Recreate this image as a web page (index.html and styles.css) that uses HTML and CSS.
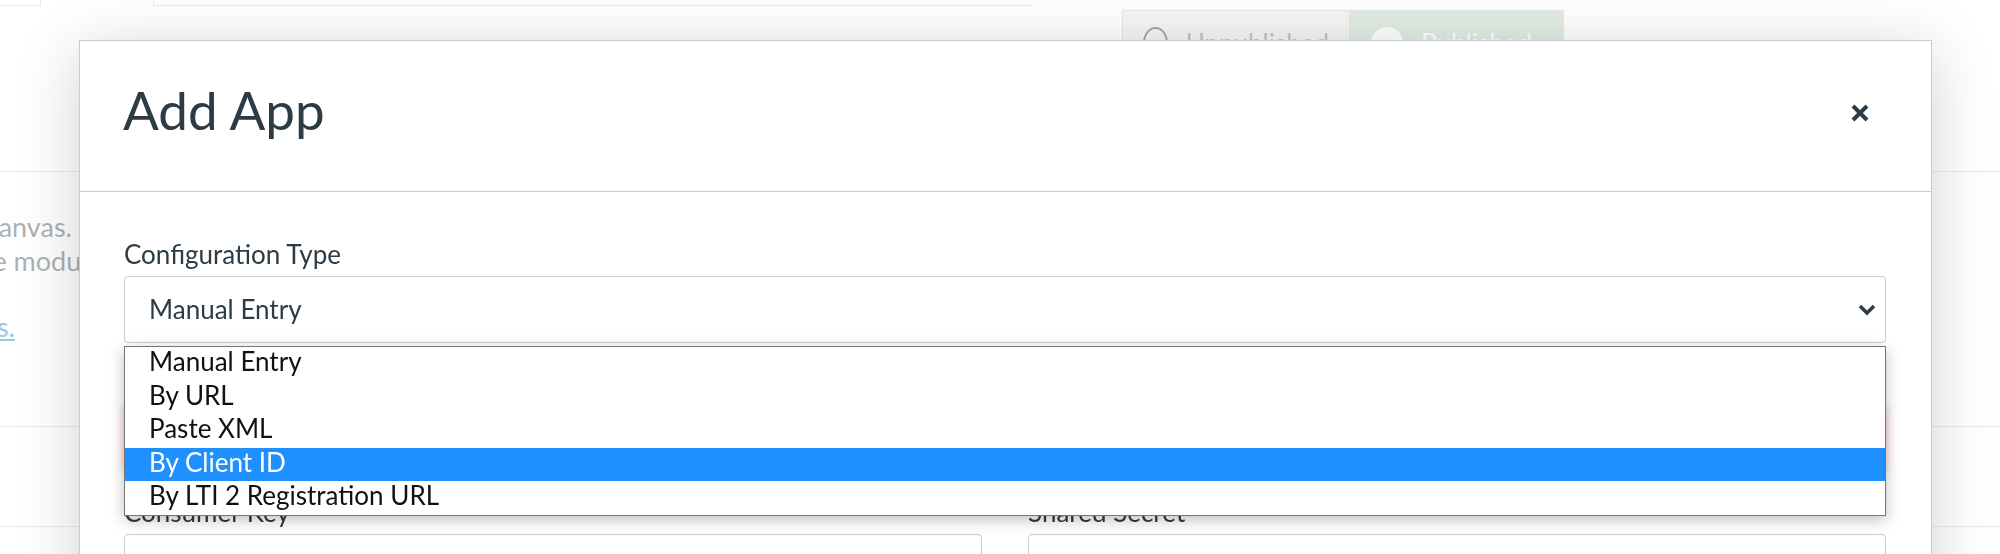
FILE: index.html
```html
<!DOCTYPE html>
<html lang="en">
<head>
    <meta charset="UTF-8">
    <meta name="viewport" content="width=device-width, initial-scale=1.0">
    <title>Add App</title>
    <link rel="stylesheet" href="styles.css">
</head>
<body>
    <!-- Page behind the modal -->
    <div class="page">
        <div class="page-top">
            <div class="top-box first"></div>
            <div class="top-box search"></div>
            <div class="publish-group">
                <button class="pub-btn unpublished"><span class="pub-dot"></span>Unpublished</button>
                <button class="pub-btn published"><span class="pub-dot"></span>Published</button>
            </div>
        </div>
        <div class="intro">
            <div class="intro-text">
                <p class="line">Apps are an easy way to add new features to Canvas.</p>
                <p class="line long">They can be added to individual courses, or to all courses through the modules.</p>
                <p class="line link-line"><a href="#">See some LTI tools that work great with Canvas.</a></p>
            </div>
        </div>
        <div class="section"></div>
        <div class="section"></div>
    </div>

    <!-- Add App modal -->
    <div class="overlay">
        <div class="modal">
            <div class="modal-header">
                <h1>Add App</h1>
                <button class="close" aria-label="Close">
                    <svg width="20" height="20" viewBox="0 0 20 20">
                        <path d="M3 3 L17 17 M17 3 L3 17" stroke="#2d3b45" stroke-width="4" fill="none"/>
                    </svg>
                </button>
            </div>
            <div class="modal-body">
                <div class="field">
                    <label class="label">Configuration Type</label>
                    <div class="select-wrap">
                        <div class="select">
                            <span>Manual Entry</span>
                            <svg width="18" height="12" viewBox="0 0 18 12">
                                <path d="M2 2 L9 9 L16 2" stroke="#2d3b45" stroke-width="3.5" fill="none"/>
                            </svg>
                        </div>
                        <ul class="options">
                            <li>Manual Entry</li>
                            <li>By URL</li>
                            <li>Paste XML</li>
                            <li class="selected">By Client ID</li>
                            <li>By LTI 2 Registration URL</li>
                        </ul>
                    </div>
                </div>
                <div class="field">
                    <label class="label">Name</label>
                    <input class="input error" type="text">
                </div>
                <div class="field-row">
                    <div class="field">
                        <label class="label">Consumer Key</label>
                        <input class="input" type="text">
                    </div>
                    <div class="field">
                        <label class="label">Shared Secret</label>
                        <input class="input" type="text">
                    </div>
                </div>
            </div>
        </div>
    </div>
</body>
</html>
```

FILE: styles.css
```css
body {
    margin: 0;
    font-family: Lato, "Open Sans", sans-serif;
    color: #2d3b45;
    background-color: #fff;
    width: 2000px;
    height: 554px;
    overflow: hidden;
}
p {
    margin: 0;
}

/* page behind */
.page-top {
    display: flex;
    align-items: flex-start;
    height: 171px;
}
.top-box {
    box-sizing: border-box;
    height: 6px;
    border-bottom: 1px solid #c7cdd1;
}
.top-box.first {
    width: 41px;
    border-right: 1px solid #c7cdd1;
}
.top-box.search {
    width: 880px;
    margin-left: 112px;
    border-left: 1px solid #c7cdd1;
}
.publish-group {
    display: flex;
    margin-left: 89px;
    margin-top: 10px;
}
.pub-btn {
    display: flex;
    align-items: center;
    gap: 18px;
    height: 66px;
    padding: 0 20px;
    font-family: Lato, sans-serif;
    font-size: 26px;
    border: 1px solid #c0c0c0;
    background-color: #e8e8e8;
    color: #6a6a6a;
}
.pub-btn.unpublished {
    width: 228px;
}
.pub-btn.published {
    width: 214px;
    background-color: #b4cfb6;
    border-color: #b4cfb6;
    color: #fff;
}
.pub-dot {
    width: 28px;
    height: 28px;
    border-radius: 50%;
    border: 2px solid #222;
}
.published .pub-dot {
    background-color: #fff;
    border-color: #fff;
}
.intro {
    border-top: 1px solid #c7cdd1;
    height: 254px;
}
.intro-text {
    width: 72px;
    display: flex;
    flex-direction: column;
    align-items: flex-end;
    padding-top: 38px;
    font-size: 27px;
    line-height: 34px;
}
.line {
    white-space: nowrap;
}
.line.long {
    margin-right: -48px;
}
.line.link-line {
    margin-top: 32px;
    margin-right: 57px;
}
.line a {
    color: #0374b5;
}
.section {
    border-top: 1px solid #c7cdd1;
    height: 99px;
}

/* modal */
.overlay {
    position: fixed;
    top: 0;
    left: 0;
    right: 0;
    bottom: 0;
    background-color: rgba(255, 255, 255, 0.6);
    padding: 40px 0 0 79px;
}
.modal {
    box-sizing: border-box;
    width: 1853px;
    height: 600px;
    background-color: #fff;
    border: 1px solid #c7cdd1;
    box-shadow: 0 10px 60px rgba(0, 0, 0, 0.18);
}
.modal-header {
    display: flex;
    justify-content: space-between;
    align-items: center;
    height: 150px;
    padding: 0 61px 0 43px;
    border-bottom: 1px solid #c7cdd1;
}
.modal-header h1 {
    margin: 0 0 13px 0;
    font-size: 53px;
    font-weight: 400;
    color: #2d3b45;
}
.close {
    border: none;
    background: none;
    padding: 0;
    margin-bottom: 6px;
    display: flex;
}
.modal-body {
    padding: 44px 45px 0 44px;
}
.field {
    margin-bottom: 22px;
}
.label {
    display: block;
    font-size: 26px;
    line-height: 36px;
    margin-bottom: 4px;
    color: #2d3b45;
}
.select-wrap {
    position: relative;
}
.select {
    box-sizing: border-box;
    display: flex;
    justify-content: space-between;
    align-items: center;
    height: 67px;
    padding: 0 9px 1px 24px;
    border: 1px solid #c7cdd1;
    border-radius: 4px;
    font-size: 26px;
}
.select svg {
    margin-top: 1px;
}
.options {
    position: absolute;
    top: 70px;
    left: 0;
    right: 0;
    margin: 0;
    padding: 0;
    list-style: none;
    background-color: #fff;
    border: 1px solid #767676;
    box-shadow: 0 4px 14px rgba(0, 0, 0, 0.25);
    z-index: 2;
}
.options li {
    height: 33.5px;
    line-height: 28px;
    padding-left: 24px;
    font-size: 26px;
    color: #111;
}
.options li.selected {
    background-color: #1e90ff;
    color: #fff;
}
.input {
    box-sizing: border-box;
    display: block;
    width: 100%;
    height: 67px;
    border: 1px solid #c7cdd1;
    border-radius: 4px;
}
.input.error {
    box-shadow: 0 0 8px rgba(230, 40, 40, 0.3);
}
.field-row {
    display: grid;
    grid-template-columns: 1fr 1fr;
    gap: 46px;
}
```
